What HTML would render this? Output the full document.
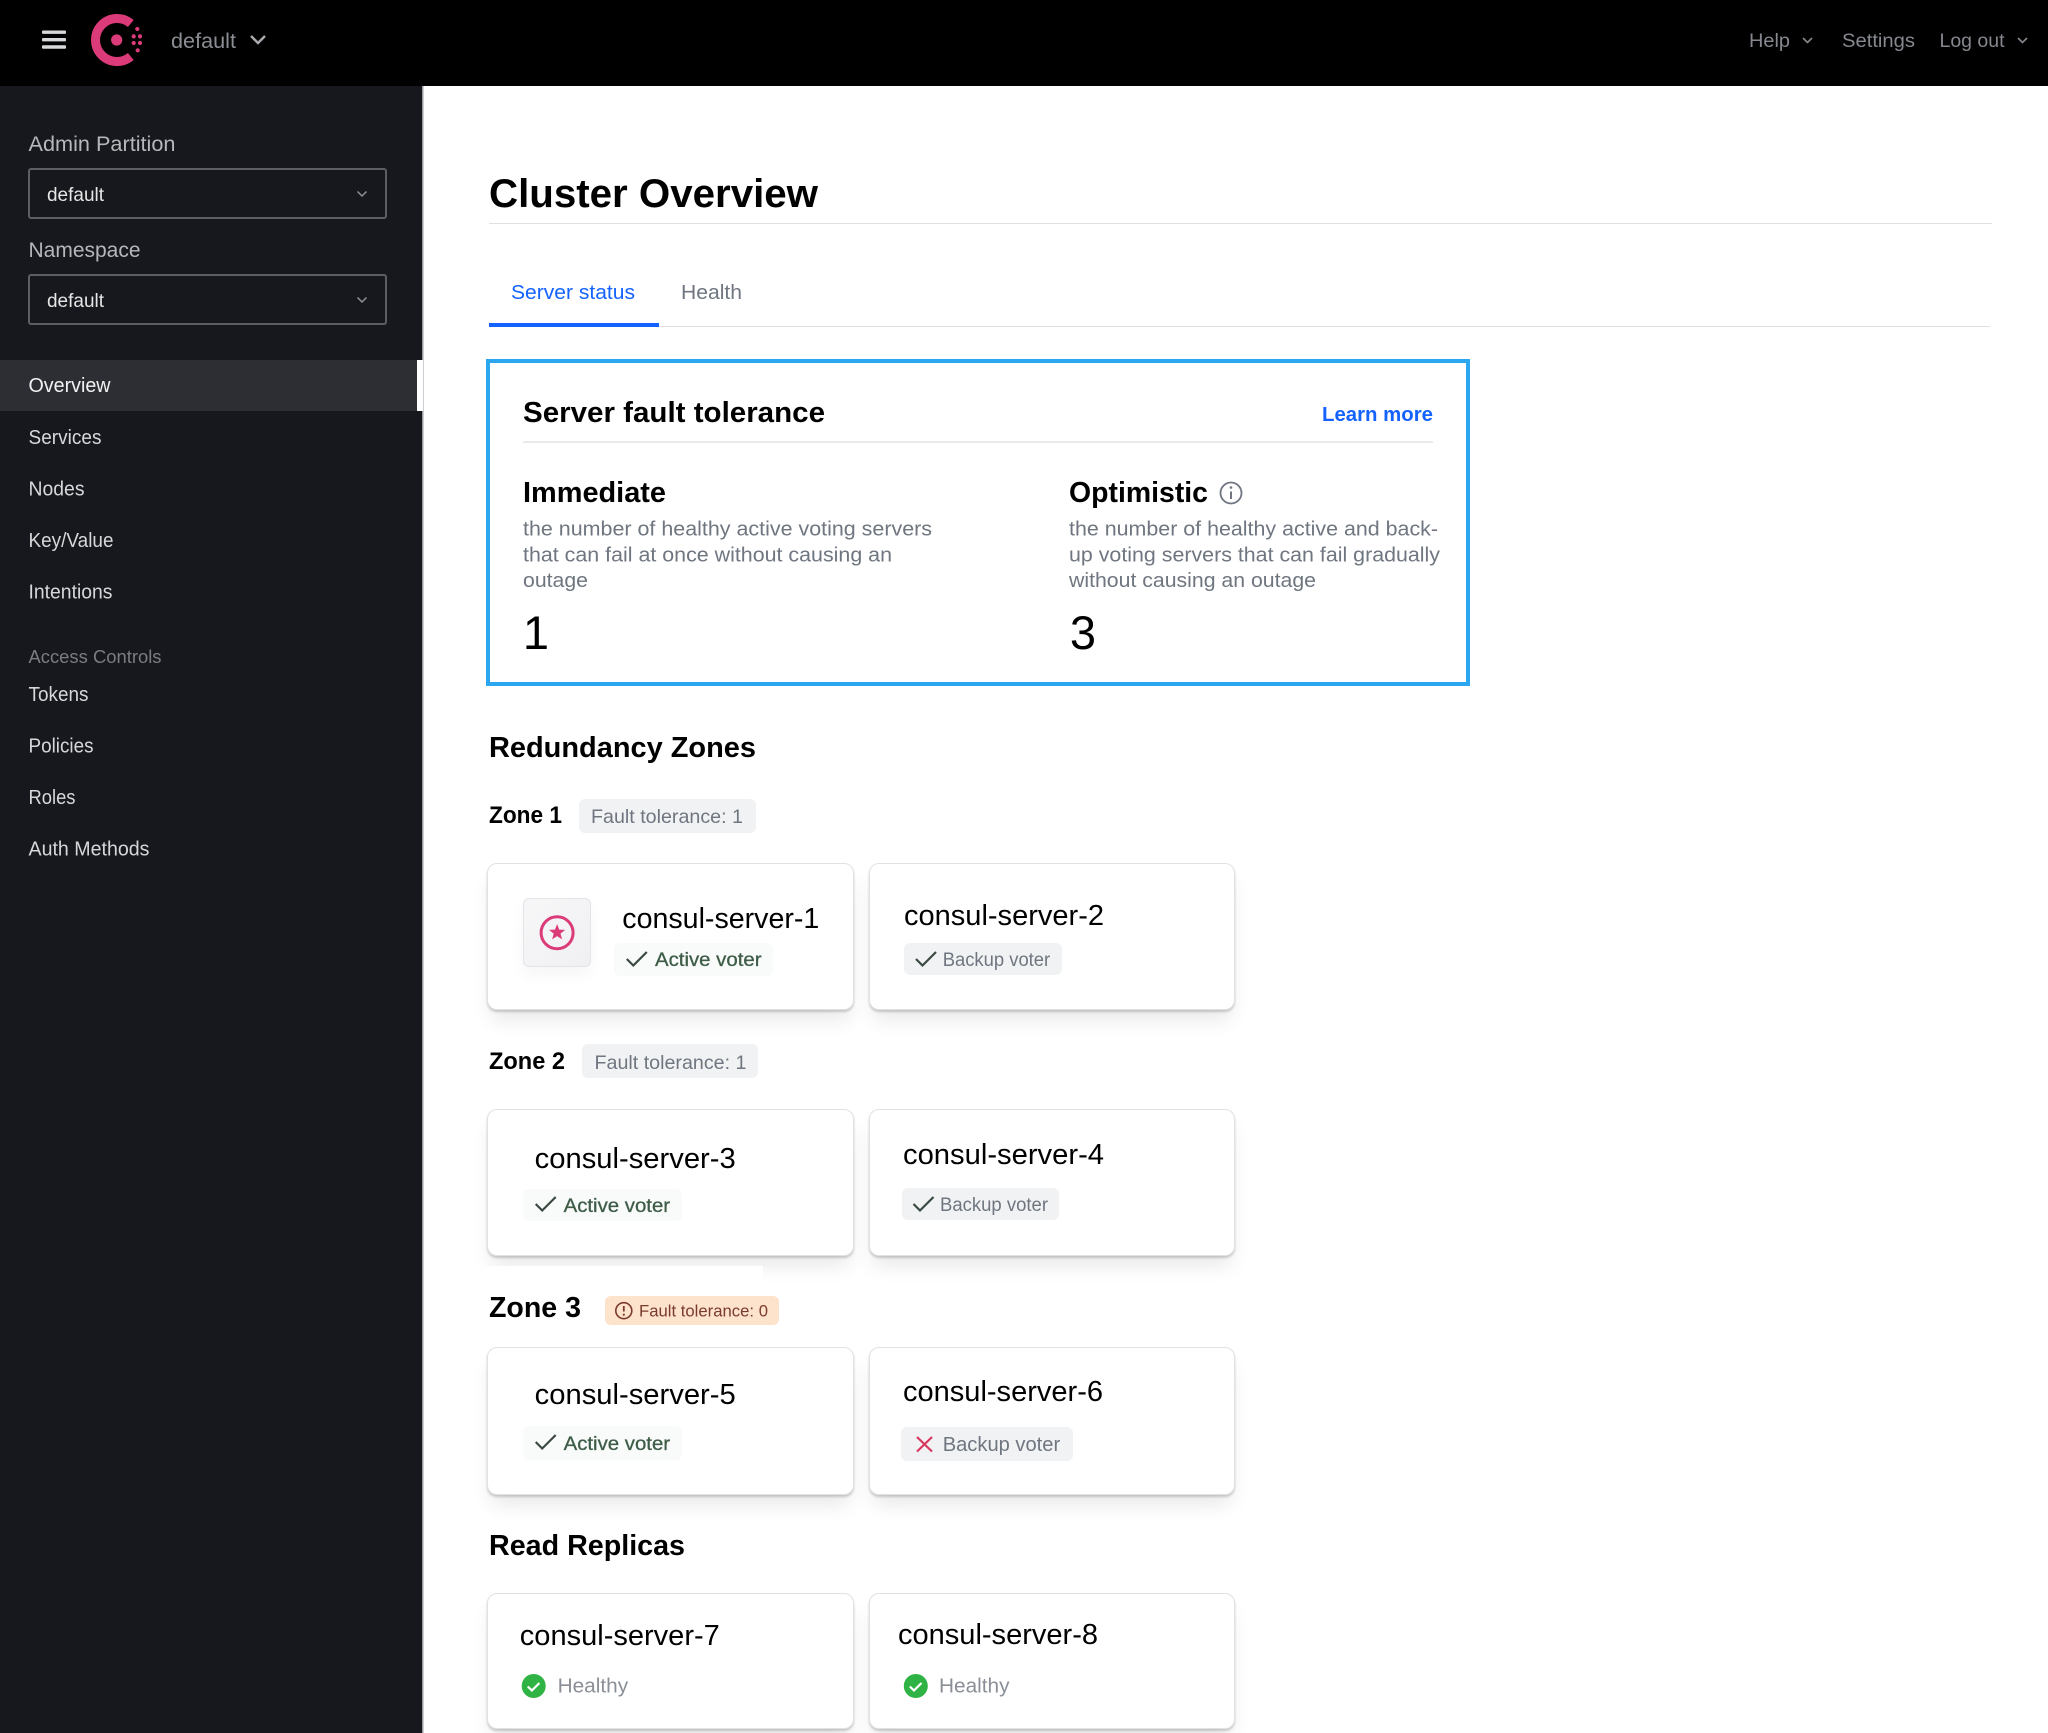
<!DOCTYPE html>
<html lang="en"><head><meta charset="utf-8"><title>Cluster Overview</title>
<style>
html,body{margin:0;padding:0;background:#fff}
body{position:relative;width:2048px;height:1733px;overflow:hidden;font-family:"Liberation Sans",sans-serif}
.a{position:absolute;box-sizing:border-box}
.card{position:absolute;box-sizing:border-box;background:#fff;border:1px solid #e1e2e5;border-radius:10px;box-shadow:0 2px 2px rgba(0,0,0,.18),0 14px 20px -4px rgba(0,0,0,.09)}
.b{position:absolute;border-radius:6px;background:#f1f2f3}
.g{background:#f9fafa}
svg{position:absolute;left:0;top:0;filter:blur(.35px)}
text{font-family:"Liberation Sans",sans-serif}
.bd{font-weight:700;fill:#000}
.nav{font-size:20px;fill:#d6d7d9}
.d{font-size:20.5px;fill:#6f7680}
.n{font-size:29px;fill:#000}
.av{font-size:19px;fill:#3d5c47;stroke:#3d5c47;stroke-width:.3}
.bv{font-size:19px;fill:#6f7680}
.ft{font-size:19.5px;fill:#6f7680}
.ck{fill:none;stroke:#3b4a41;stroke-width:2.2}
</style></head><body>
<div class="a" style="left:0;top:0;width:2048px;height:86px;background:#000"></div>
<div class="a" style="left:0;top:86px;width:423px;height:1647px;background:#16181d"></div>
<div class="a" style="left:0;top:360px;width:417px;height:51px;background:#2c2e33"></div>
<div class="a" style="left:28px;top:168px;width:359px;height:51px;border:2px solid #5c5e62;border-radius:3px"></div>
<div class="a" style="left:28px;top:274px;width:359px;height:51px;border:2px solid #5c5e62;border-radius:3px"></div>
<div class="a" style="left:489px;top:223px;width:1503px;height:1px;background:#dfe0e2"></div>
<div class="a" style="left:489px;top:326px;width:1501px;height:1px;background:#dfe0e2"></div>
<div class="a" style="left:489px;top:323px;width:170px;height:4px;background:#1563ff"></div>
<div class="a" style="left:486px;top:359px;width:984px;height:327px;border:4px solid #2aa7ee"></div>
<div class="a" style="left:523px;top:441px;width:910px;height:2px;background:#e9eaeb"></div>

<div class="b" style="left:579px;top:799px;width:177px;height:34px"></div>
<div class="b" style="left:582px;top:1044px;width:176px;height:34px"></div>
<div class="b" style="left:604.500px;top:1296px;width:174px;height:29px;background:#fde2cc"></div>

<div class="card" style="left:487px;top:863px;width:367px;height:147px"></div>
<div class="card" style="left:869px;top:863px;width:366px;height:147px"></div>
<div class="card" style="left:487px;top:1109px;width:367px;height:147px"></div>
<div class="card" style="left:869px;top:1109px;width:366px;height:147px"></div>
<div class="a" style="left:485px;top:1266px;width:278px;height:28px;background:#fff"></div>
<div class="card" style="left:487px;top:1347px;width:367px;height:148px"></div>
<div class="card" style="left:869px;top:1347px;width:366px;height:148px"></div>
<div class="card" style="left:487px;top:1593px;width:367px;height:136px"></div>
<div class="card" style="left:869px;top:1593px;width:366px;height:136px"></div>

<div class="a" style="left:523px;top:898px;width:68px;height:69px;border:1px solid #e3e3e8;border-radius:6px;background:linear-gradient(135deg,#f7f7f8,#f0f0f3);box-shadow:0 8px 16px rgba(0,0,0,.04)"></div>
<div class="b g" style="left:614px;top:943px;width:159px;height:33px"></div>
<div class="b" style="left:904px;top:943px;width:157.500px;height:32px"></div>
<div class="b g" style="left:523px;top:1189px;width:159px;height:32px"></div>
<div class="b" style="left:902px;top:1188px;width:157px;height:32px"></div>
<div class="b g" style="left:523px;top:1426px;width:159px;height:34px"></div>
<div class="b" style="left:901px;top:1427px;width:171.500px;height:34px"></div>

<svg width="2048" height="1733" viewBox="0 0 2048 1733" xmlns="http://www.w3.org/2000/svg">
<!-- header -->
<g fill="#d8d9db"><rect x="42" y="30.500" width="24" height="3.400" rx="1"/><rect x="42" y="38" width="24" height="3.400" rx="1"/><rect x="42" y="45.300" width="24" height="3.400" rx="1"/></g>
<path d="M130.800 23.500A21.500 21.500 0 1 0 130.800 56.500" fill="none" stroke="#db3b78" stroke-width="9"/>
<g fill="#db3b78"><circle cx="116.700" cy="40" r="5.600"/><circle cx="137.300" cy="29" r="2.100"/><circle cx="133.700" cy="36.400" r="2.100"/><circle cx="140" cy="36.400" r="2.100"/><circle cx="133.700" cy="43" r="2.100"/><circle cx="140" cy="43" r="2.100"/><circle cx="137.700" cy="50.300" r="2.100"/></g>
<text x="171" y="48" font-size="21.500" fill="#8a8d93" textLength="65" lengthAdjust="spacingAndGlyphs">default</text>
<path d="M251 36l7 7 7-7" fill="none" stroke="#a9abaf" stroke-width="2.400"/>
<g font-size="19" fill="#85888e">
<text x="1749" y="47" textLength="41" lengthAdjust="spacingAndGlyphs">Help</text>
<text x="1842" y="47" textLength="73" lengthAdjust="spacingAndGlyphs">Settings</text>
<text x="1939.500" y="47" textLength="65" lengthAdjust="spacingAndGlyphs">Log out</text>
</g>
<path d="M1803 38l4.500 4.500 4.500-4.500M2018 38l4.500 4.500 4.500-4.500" fill="none" stroke="#85888e" stroke-width="1.600"/>
<!-- sidebar -->
<rect x="422" y="86" width="1.500" height="1647" fill="#9a9ca0"/>
<rect x="417" y="360" width="6" height="51" fill="#fff"/>
<g font-size="21" fill="#b5b7ba">
<text x="28.500" y="151" textLength="147" lengthAdjust="spacingAndGlyphs">Admin Partition</text>
<text x="28.500" y="257" textLength="112" lengthAdjust="spacingAndGlyphs">Namespace</text>
</g>
<g font-size="19.500" fill="#e6e6e6">
<text x="47" y="201" textLength="57" lengthAdjust="spacingAndGlyphs">default</text>
<text x="47" y="307" textLength="57" lengthAdjust="spacingAndGlyphs">default</text>
</g>
<path d="M357.500 191.500l4.500 4.500 4.500-4.500M357.500 297.500l4.500 4.500 4.500-4.500" fill="none" stroke="#8f9195" stroke-width="1.500"/>
<text class="nav" x="28.500" y="392" textLength="82" lengthAdjust="spacingAndGlyphs" style="fill:#f2f2f3">Overview</text>
<text class="nav" x="28.500" y="444" textLength="73" lengthAdjust="spacingAndGlyphs">Services</text>
<text class="nav" x="28.500" y="495.500" textLength="56" lengthAdjust="spacingAndGlyphs">Nodes</text>
<text class="nav" x="28.500" y="547" textLength="85" lengthAdjust="spacingAndGlyphs">Key/Value</text>
<text class="nav" x="28.500" y="598.500" textLength="84" lengthAdjust="spacingAndGlyphs">Intentions</text>
<text x="28.500" y="663" font-size="18" fill="#7a7c80" textLength="133" lengthAdjust="spacingAndGlyphs">Access Controls</text>
<text class="nav" x="28.500" y="701" textLength="60" lengthAdjust="spacingAndGlyphs">Tokens</text>
<text class="nav" x="28.500" y="752.500" textLength="65" lengthAdjust="spacingAndGlyphs">Policies</text>
<text class="nav" x="28.500" y="804" textLength="47" lengthAdjust="spacingAndGlyphs">Roles</text>
<text class="nav" x="28.500" y="855.500" textLength="121" lengthAdjust="spacingAndGlyphs">Auth Methods</text>
<!-- main -->
<text class="bd" x="489" y="207" font-size="40" textLength="329" lengthAdjust="spacingAndGlyphs">Cluster Overview</text>
<text x="511" y="299" font-size="20.500" fill="#1563ff" textLength="124" lengthAdjust="spacingAndGlyphs">Server status</text>
<text x="681" y="299" font-size="20.500" fill="#6f7680" textLength="61" lengthAdjust="spacingAndGlyphs">Health</text>
<text class="bd" x="523" y="422" font-size="29" textLength="302" lengthAdjust="spacingAndGlyphs">Server fault tolerance</text>
<text x="1322" y="421" font-size="20.500" font-weight="700" fill="#1563ff" textLength="111" lengthAdjust="spacingAndGlyphs">Learn more</text>
<text class="bd" x="523" y="502" font-size="29" textLength="143" lengthAdjust="spacingAndGlyphs">Immediate</text>
<text class="bd" x="1069" y="502" font-size="29" textLength="139" lengthAdjust="spacingAndGlyphs">Optimistic</text>
<circle cx="1231" cy="493" r="10.500" fill="none" stroke="#6f7680" stroke-width="1.800"/>
<path d="M1231 491.500v7.500" stroke="#6f7680" stroke-width="2" fill="none"/><circle cx="1231" cy="487.500" r="1.300" fill="#6f7680"/>
<text class="d" x="523" y="535.500" textLength="409" lengthAdjust="spacingAndGlyphs">the number of healthy active voting servers</text>
<text class="d" x="523" y="561.500" textLength="369" lengthAdjust="spacingAndGlyphs">that can fail at once without causing an</text>
<text class="d" x="523" y="587" textLength="65" lengthAdjust="spacingAndGlyphs">outage</text>
<text class="d" x="1069" y="535.500" textLength="369" lengthAdjust="spacingAndGlyphs">the number of healthy active and back-</text>
<text class="d" x="1069" y="561.500" textLength="371" lengthAdjust="spacingAndGlyphs">up voting servers that can fail gradually</text>
<text class="d" x="1069" y="587" textLength="247" lengthAdjust="spacingAndGlyphs">without causing an outage</text>
<text x="536" y="649" font-size="47" text-anchor="middle" fill="#000">1</text>
<text x="1083" y="649" font-size="47" text-anchor="middle" fill="#000">3</text>
<text class="bd" x="489" y="757" font-size="29" textLength="267" lengthAdjust="spacingAndGlyphs">Redundancy Zones</text>
<text class="bd" x="489" y="823" font-size="24" textLength="73" lengthAdjust="spacingAndGlyphs">Zone 1</text>
<text class="ft" x="591" y="823" textLength="152" lengthAdjust="spacingAndGlyphs">Fault tolerance: 1</text>
<circle cx="557.100" cy="932.700" r="16" fill="none" stroke="#db3b78" stroke-width="3"/>
<path d="M557.100 924L559.200 929.600 565.200 929.900 560.500 933.600 562.100 939.400 557.100 936.100 552.100 939.400 553.700 933.600 549 929.900 555 929.600Z" fill="#db3b78"/>
<text class="n" x="622.300" y="928" textLength="197" lengthAdjust="spacingAndGlyphs">consul-server-1</text>
<path class="ck" d="M626.800 959l6.500 6.500 13.500-13.500"/>
<text class="av" x="655" y="966" textLength="106.500" lengthAdjust="spacingAndGlyphs">Active voter</text>
<text class="n" x="904" y="925" textLength="200" lengthAdjust="spacingAndGlyphs">consul-server-2</text>
<path class="ck" d="M916 959l6.500 6.500 13.500-13.500"/>
<text class="bv" x="942.700" y="966" textLength="107.500" lengthAdjust="spacingAndGlyphs">Backup voter</text>
<text class="bd" x="489" y="1069" font-size="24" textLength="76" lengthAdjust="spacingAndGlyphs">Zone 2</text>
<text class="ft" x="594.500" y="1069" textLength="152" lengthAdjust="spacingAndGlyphs">Fault tolerance: 1</text>
<text class="n" x="534.700" y="1168" textLength="201" lengthAdjust="spacingAndGlyphs">consul-server-3</text>
<path class="ck" d="M535.700 1204l6.500 6.500 13.500-13.500"/>
<text class="av" x="563.600" y="1212" textLength="106.500" lengthAdjust="spacingAndGlyphs">Active voter</text>
<text class="n" x="903" y="1164" textLength="201" lengthAdjust="spacingAndGlyphs">consul-server-4</text>
<path class="ck" d="M913.500 1204l6.500 6.500 13.500-13.500"/>
<text class="bv" x="940" y="1211" textLength="108" lengthAdjust="spacingAndGlyphs">Backup voter</text>
<text class="bd" x="489" y="1317" font-size="29" textLength="92" lengthAdjust="spacingAndGlyphs">Zone 3</text>
<circle cx="623.800" cy="1310.700" r="8" fill="none" stroke="#7a3b2c" stroke-width="1.600"/>
<path d="M623.800 1306v5.500" stroke="#7a3b2c" stroke-width="1.800"/><circle cx="623.800" cy="1314.700" r="1.100" fill="#7a3b2c"/>
<text x="639" y="1316.700" font-size="17" fill="#7a3b2c" textLength="129" lengthAdjust="spacingAndGlyphs">Fault tolerance: 0</text>
<text class="n" x="534.700" y="1404" textLength="201" lengthAdjust="spacingAndGlyphs">consul-server-5</text>
<path class="ck" d="M535.700 1442l6.500 6.500 13.500-13.500"/>
<text class="av" x="563.600" y="1450" textLength="106.500" lengthAdjust="spacingAndGlyphs">Active voter</text>
<text class="n" x="903" y="1401" textLength="200" lengthAdjust="spacingAndGlyphs">consul-server-6</text>
<path d="M917 1437l15 14.500M932 1437l-15 14.500" fill="none" stroke="#d8375f" stroke-width="2.200"/>
<text x="942.700" y="1451" font-size="20.500" fill="#6f7680" textLength="117.500" lengthAdjust="spacingAndGlyphs">Backup voter</text>
<text class="bd" x="489" y="1555" font-size="29" textLength="196" lengthAdjust="spacingAndGlyphs">Read Replicas</text>
<text class="n" x="519.800" y="1645" textLength="200" lengthAdjust="spacingAndGlyphs">consul-server-7</text>
<text class="n" x="898" y="1644" textLength="200" lengthAdjust="spacingAndGlyphs">consul-server-8</text>
<circle cx="533.700" cy="1686" r="12" fill="#2fb344"/><path d="M527.700 1686.500l4.200 4 7.500-7.500" fill="none" stroke="#fff" stroke-width="2.200"/>
<circle cx="915.800" cy="1686" r="12" fill="#2fb344"/><path d="M909.800 1686.500l4.200 4 7.500-7.500" fill="none" stroke="#fff" stroke-width="2.200"/>
<text x="557.600" y="1692.700" font-size="20.500" fill="#8a8f97" textLength="70.500" lengthAdjust="spacingAndGlyphs">Healthy</text>
<text x="939" y="1692.700" font-size="20.500" fill="#8a8f97" textLength="70.500" lengthAdjust="spacingAndGlyphs">Healthy</text>
</svg>
</body></html>
